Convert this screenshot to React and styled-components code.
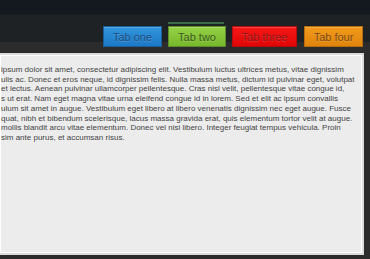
import React from 'react';
import styled, { createGlobalStyle } from 'styled-components';

const GlobalStyle = createGlobalStyle`
  html, body {
    margin: 0;
    padding: 0;
    background: #2c2c2c;
    overflow: hidden;
  }
  body {
    font-family: "Liberation Sans", Arial, sans-serif;
  }
`;

const Page = styled.div`
  width: 370px;
  height: 259px;
  display: flex;
  flex-direction: column;
  overflow: hidden;
`;

const TopStrip = styled.div`
  height: 15px;
  background: #13191e;
  border-bottom: 1px solid #181c20;
  box-sizing: border-box;
`;

const TabBar = styled.div`
  height: 27px;
  background: #1f2225;
  display: flex;
  justify-content: flex-end;
  align-items: flex-start;
  gap: 6px;
  padding: 11px 7px 0 0;
  box-sizing: border-box;
`;

const tabColors = {
  blue: { top: '#3196dc', bottom: '#1c78c6', border: '#1a5f9a', text: '#1f4e7c' },
  green: { top: '#94d044', bottom: '#78b82c', border: '#5c8d2a', text: '#3a5a1c' },
  red: { top: '#f41818', bottom: '#e00606', border: '#b40c0c', text: '#8e1616' },
  orange: { top: '#f29a1c', bottom: '#e0850c', border: '#b86c10', text: '#7c4a12' },
};

const Tab = styled.div`
  position: relative;
  z-index: 1;
  width: ${(p) => p.$w}px;
  height: 21px;
  box-sizing: border-box;
  display: flex;
  align-items: center;
  justify-content: center;
  font-size: 11px;
  color: ${(p) => tabColors[p.$color].text};
  text-shadow: 0 1px 0 rgba(255, 255, 255, 0.18);
  background: linear-gradient(${(p) => tabColors[p.$color].top}, ${(p) => tabColors[p.$color].bottom});
  border: 1px solid ${(p) => tabColors[p.$color].border};
  box-shadow: inset 0 1px 0 rgba(255, 255, 255, 0.2);
  margin-right: ${(p) => p.$extra || 0}px;

  ${(p) => p.$active && `
    &::before {
      content: '';
      position: absolute;
      left: -1px;
      right: 1px;
      top: -5px;
      height: 2px;
      background: #3d6a48;
    }
  `}
`;

const Body = styled.div`
  flex: 1;
  background: #2c2c2c;
  padding: 11px 6px 4px 0;
  display: flex;
  box-sizing: border-box;
`;

const Panel = styled.div`
  flex: 1;
  background: #ececec;
  border: 2px solid #dcdcdc;
  border-left: none;
  box-shadow: inset 0 0 0 1px #ffffff;
  padding: 10px 0 0 1px;
  box-sizing: border-box;
  overflow: hidden;
`;

const Line = styled.div`
  white-space: nowrap;
  font-size: 8px;
  line-height: 9.7px;
  color: #444444;
`;

const lines = [
  'ipsum dolor sit amet, consectetur adipiscing elit. Vestibulum luctus ultrices metus, vitae dignissim',
  'ulis ac. Donec et eros neque, id dignissim felis. Nulla massa metus, dictum id pulvinar eget, volutpat',
  'et lectus. Aenean pulvinar ullamcorper pellentesque. Cras nisl velit, pellentesque vitae congue id,',
  's ut erat. Nam eget magna vitae urna eleifend congue id in lorem. Sed et elit ac ipsum convallis',
  'ulum sit amet in augue. Vestibulum eget libero at libero venenatis dignissim nec eget augue. Fusce',
  'quat, nibh et bibendum scelerisque, lacus massa gravida erat, quis elementum tortor velit at augue.',
  'mollis blandit arcu vitae elementum. Donec vel nisi libero. Integer feugiat tempus vehicula. Proin',
  'sim ante purus, et accumsan risus.',
];

const tabs = [
  { label: 'Tab one', color: 'blue', w: 59 },
  { label: 'Tab two', color: 'green', w: 58, active: true },
  { label: 'Tab three', color: 'red', w: 65, extra: 1 },
  { label: 'Tab four', color: 'orange', w: 59 },
];

const App = () => (
  <Page>
    <GlobalStyle />
    <TopStrip />
    <TabBar>
      {tabs.map((t) => (
        <Tab key={t.label} $color={t.color} $w={t.w} $active={t.active} $extra={t.extra}>
          {t.label}
        </Tab>
      ))}
    </TabBar>
    <Body>
      <Panel>
        {lines.map((l, i) => (
          <Line key={i}>{l}</Line>
        ))}
      </Panel>
    </Body>
  </Page>
);

export default App;
